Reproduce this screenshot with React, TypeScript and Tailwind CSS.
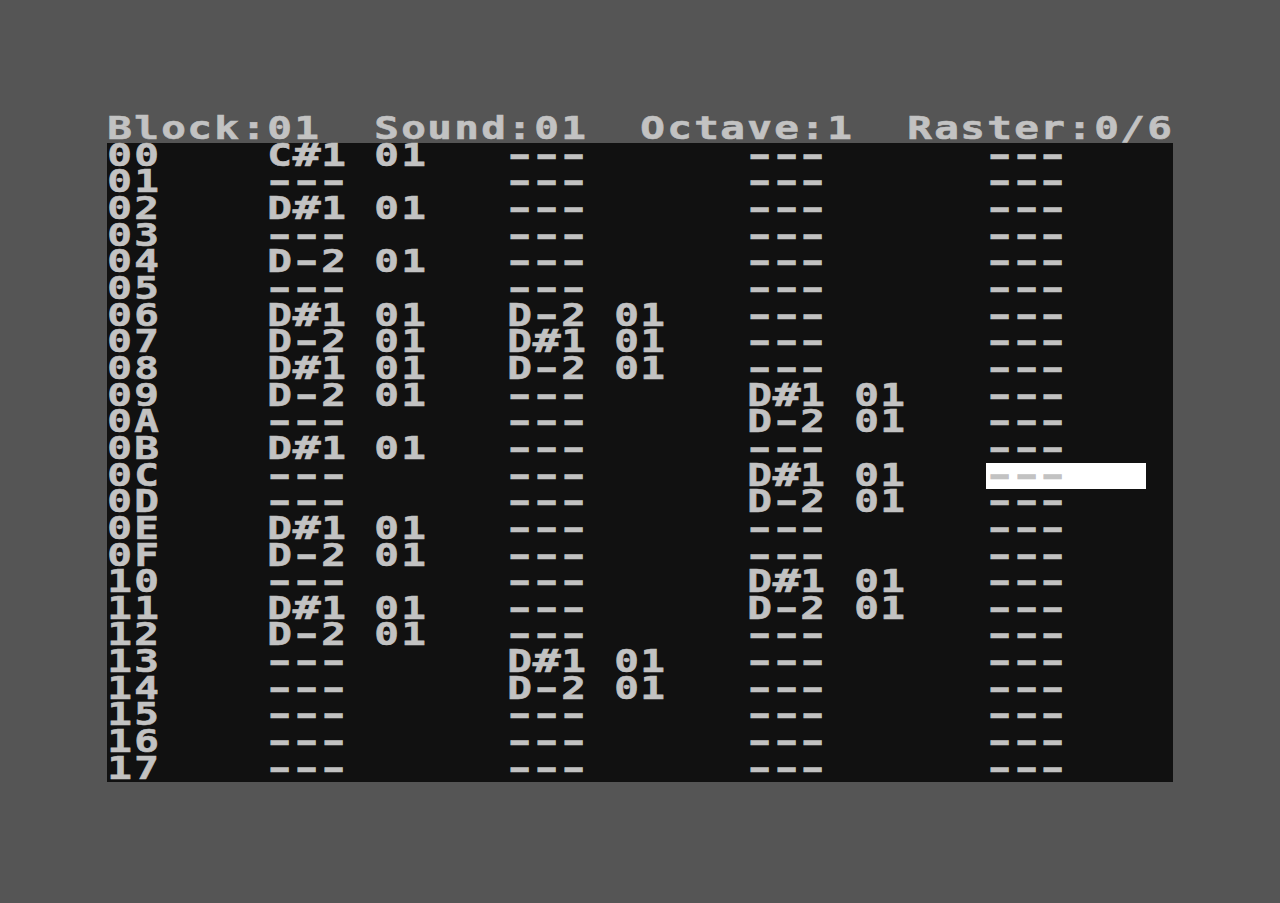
const COLS = 40;

type Step = [string, string] | null;

// one pattern line: row number, then note + sound for each of the four voices
type Line = { row: string; voices: Step[] };

const D1: Step = ['D#1', '01'];
const D2: Step = ['D-2', '01'];

const LINES: Line[] = [
  { row: '00', voices: [['C#1', '01'], null, null, null] },
  { row: '01', voices: [null, null, null, null] },
  { row: '02', voices: [D1, null, null, null] },
  { row: '03', voices: [null, null, null, null] },
  { row: '04', voices: [D2, null, null, null] },
  { row: '05', voices: [null, null, null, null] },
  { row: '06', voices: [D1, D2, null, null] },
  { row: '07', voices: [D2, D1, null, null] },
  { row: '08', voices: [D1, D2, null, null] },
  { row: '09', voices: [D2, null, D1, null] },
  { row: '0A', voices: [null, null, D2, null] },
  { row: '0B', voices: [D1, null, null, null] },
  { row: '0C', voices: [null, null, D1, null] },
  { row: '0D', voices: [null, null, D2, null] },
  { row: '0E', voices: [D1, null, null, null] },
  { row: '0F', voices: [D2, null, null, null] },
  { row: '10', voices: [null, null, D1, null] },
  { row: '11', voices: [D1, null, D2, null] },
  { row: '12', voices: [D2, null, null, null] },
  { row: '13', voices: [null, D1, null, null] },
  { row: '14', voices: [null, D2, null, null] },
  { row: '15', voices: [null, null, null, null] },
  { row: '16', voices: [null, null, null, null] },
  { row: '17', voices: [null, null, null, null] },
];

const VOICE_COL = [6, 15, 24, 33];

const CURSOR = { row: 12, from: 33, to: 38 };

function layout(line: Line): string[] {
  const chars: string[] = Array(COLS).fill(' ');
  const put = (col: number, s: string) => {
    for (let i = 0; i < s.length; i++) chars[col + i] = s[i];
  };
  put(0, line.row);
  line.voices.forEach((v, i) => {
    const col = VOICE_COL[i];
    if (v) {
      put(col, v[0]);
      put(col + 4, v[1]);
    } else {
      put(col, '---');
    }
  });
  return chars;
}

// the font is narrower than the 8x8 char set, so glyphs get widened per char
function stretch(ch: string) {
  if (ch === '-') return 'scale-x-[1.75]';
  if (ch === '#') return 'scale-x-[1.45]';
  return 'scale-x-[1.28]';
}

function TextRow({ chars, cursor }: { chars: string[]; cursor?: [number, number] }) {
  return (
    <div className="flex h-[26.667px]">
      {chars.map((ch, i) => {
        const lit = cursor && i >= cursor[0] && i <= cursor[1];
        return (
          <div
            key={i}
            className={`h-[26.667px] w-[26.667px] shrink-0 text-center leading-[24.5px] ${lit ? 'bg-white' : ''}`}
          >
            {ch !== ' ' && <span className={`inline-block ${stretch(ch)}`}>{ch}</span>}
          </div>
        );
      })}
    </div>
  );
}

export default function App() {
  const header = 'Block:01  Sound:01  Octave:1  Raster:0/6'.split('');

  return (
    <div className="flex h-[903px] w-full justify-center overflow-hidden bg-[#555555] pt-[116px]">
      <div className="w-[1066.667px] font-['DejaVu_Sans_Mono','Liberation_Mono',monospace] text-[32px] font-bold text-[#c2c2c2] [-webkit-text-stroke:0.6px_#c2c2c2]">
        <TextRow chars={header} />
        <div className="bg-[#111111]">
          {LINES.map((line, r) => (
            <TextRow
              key={line.row}
              chars={layout(line)}
              cursor={r === CURSOR.row ? [CURSOR.from, CURSOR.to] : undefined}
            />
          ))}
        </div>
      </div>
    </div>
  );
}
